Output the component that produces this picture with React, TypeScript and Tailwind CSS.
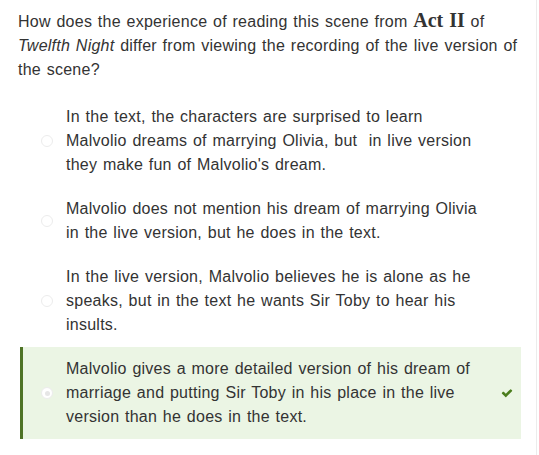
const OPTIONS = [
  {
    text: "In the text, the characters are surprised to learn Malvolio dreams of marrying Olivia, but  in live version they make fun of Malvolio's dream.",
    correct: false,
  },
  {
    text: 'Malvolio does not mention his dream of marrying Olivia in the live version, but he does in the text.',
    correct: false,
  },
  {
    text: 'In the live version, Malvolio believes he is alone as he speaks, but in the text he wants Sir Toby to hear his insults.',
    correct: false,
  },
  {
    text: 'Malvolio gives a more detailed version of his dream of marriage and putting Sir Toby in his place in the live version than he does in the text.',
    correct: true,
  },
]

function CheckMark() {
  return (
    <svg viewBox="0 0 1792 1792" className="h-[12px] w-[12px]" fill="#4a7d1c">
      <path d="M1671 566q0 40-28 68l-724 724-136 136q-28 28-68 28t-68-28l-136-136-362-362q-28-28-28-68t28-68l136-136q28-28 68-28t68 28l294 295 656-657q28-28 68-28t68 28l136 136q28 28 28 68z" />
    </svg>
  )
}

export default function App() {
  return (
    <div className="min-h-[455px] w-[537px] border-r border-[#ececec] bg-white font-['Liberation_Sans',Arial,sans-serif] text-[16px] leading-[24px] tracking-[0.25px] text-[#333333] [word-spacing:1px]">
      {/* Question */}
      <div className="w-[527px] pl-[18px] pt-[10px]">
        <p>
          How does the experience of reading this scene from{' '}
          <span className="font-['Liberation_Serif',serif] text-[20px] font-bold leading-[20px] tracking-normal">Act II</span> of{' '}
          <em>Twelfth Night</em> differ from viewing the recording of the live version of the scene?
        </p>
      </div>

      {/* Answers */}
      <div className="ml-[20px] mt-[13px] flex w-[501px] flex-col">
        {OPTIONS.map(opt => (
          <div
            key={opt.text}
            className={
              opt.correct
                ? 'flex items-center border-l-[3px] border-[#4e7326] bg-[#ebf5e4] py-[10px] pl-[18px] pr-[8px]'
                : 'flex items-center border-l-[3px] border-transparent py-[10px] pl-[18px] pr-[8px]'
            }
          >
            <span className="flex h-[12px] w-[12px] shrink-0 items-center justify-center rounded-full border border-[#ececec] bg-white">
              {opt.correct && <span className="h-[5px] w-[5px] rounded-full bg-[#e6e6e6]" />}
            </span>
            <p className="ml-[13px] w-[422px] whitespace-pre-wrap">{opt.text}</p>
            <div className="ml-[15px] flex w-[12px] justify-center">
              {opt.correct && <CheckMark />}
            </div>
          </div>
        ))}
      </div>
    </div>
  )
}
